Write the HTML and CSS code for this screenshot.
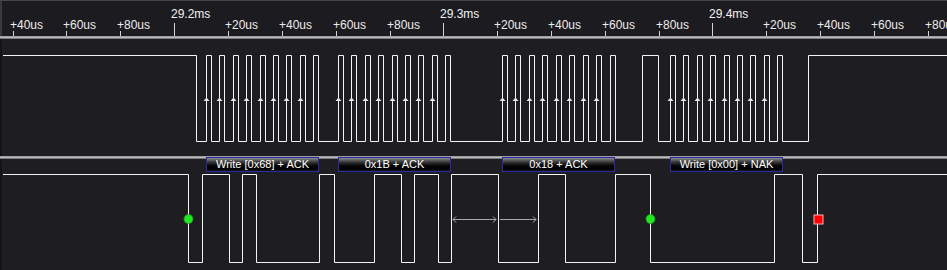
FILE: index.html
```html
<!DOCTYPE html>
<html lang="en">
<head>
    <meta charset="UTF-8">
    <title>I2C capture</title>
    <link rel="stylesheet" href="styles.css">
</head>
<body>
    <div class="scope">
        <div class="ruler">
            <svg class="ruler-svg" width="947" height="36">
                <g class="ticks">
                    <path d="M13.5 31V36M66.5 31V36M120.5 31V36M228.5 31V36M282.5 31V36M336.5 31V36M390.5 31V36M497.5 31V36M551.5 31V36M605.5 31V36M659.5 31V36M766.5 31V36M820.5 31V36M874.5 31V36M928.5 31V36"/>
                    <path d="M174.5 23V36M443.5 23V36M712.5 23V36"/>
                </g>
                <g class="labels">
                    <text x="10" y="29">+40us</text>
                    <text x="63" y="29">+60us</text>
                    <text x="117" y="29">+80us</text>
                    <text class="major" x="171" y="18">29.2ms</text>
                    <text x="225" y="29">+20us</text>
                    <text x="279" y="29">+40us</text>
                    <text x="333" y="29">+60us</text>
                    <text x="387" y="29">+80us</text>
                    <text class="major" x="440" y="18">29.3ms</text>
                    <text x="494" y="29">+20us</text>
                    <text x="548" y="29">+40us</text>
                    <text x="602" y="29">+60us</text>
                    <text x="656" y="29">+80us</text>
                    <text class="major" x="709" y="18">29.4ms</text>
                    <text x="763" y="29">+20us</text>
                    <text x="817" y="29">+40us</text>
                    <text x="871" y="29">+60us</text>
                    <text x="925" y="29">+80us</text>
                </g>
            </svg>
        </div>
        <div class="divider"></div>

        <!-- canal 1: SCL -->
        <div class="channel scl">
            <svg width="947" height="117">
                <defs>
                    <path id="edge" d="M-3 62 L0 58.5 L3 62 Z"/>
                </defs>
                <path class="wave" d="M3 16.5H196.5V102.5
                    H206.5V16.5H211.5V102.5H219.5V16.5H224.5V102.5H233.5V16.5H238.5V102.5H246.5V16.5H251.5V102.5
                    H260.5V16.5H265.5V102.5H273.5V16.5H278.5V102.5H286.5V16.5H291.5V102.5H300.5V16.5H305.5V102.5
                    H313.5V16.5H318.5V102.5
                    H338.5V16.5H343.5V102.5H351.5V16.5H356.5V102.5H365.5V16.5H370.5V102.5H378.5V16.5H383.5V102.5
                    H392.5V16.5H397.5V102.5H405.5V16.5H410.5V102.5H418.5V16.5H423.5V102.5H432.5V16.5H437.5V102.5
                    H445.5V16.5H450.5V102.5
                    H502.5V16.5H507.5V102.5H515.5V16.5H520.5V102.5H529.5V16.5H534.5V102.5H542.5V16.5H547.5V102.5
                    H556.5V16.5H561.5V102.5H569.5V16.5H574.5V102.5H583.5V16.5H588.5V102.5H596.5V16.5H601.5V102.5
                    H610.5V16.5H615.5V102.5
                    H642.5V16.5H658.5V102.5
                    H670.5V16.5H675.5V102.5H683.5V16.5H688.5V102.5H697.5V16.5H702.5V102.5H710.5V16.5H715.5V102.5
                    H724.5V16.5H729.5V102.5H737.5V16.5H742.5V102.5H750.5V16.5H755.5V102.5H764.5V16.5H769.5V102.5
                    H777.5V16.5H782.5V102.5
                    H808.5V16.5H947"/>
                <g class="edges">
                    <use href="#edge" x="206.5"/><use href="#edge" x="219.5"/><use href="#edge" x="233.5"/><use href="#edge" x="246.5"/>
                    <use href="#edge" x="260.5"/><use href="#edge" x="273.5"/><use href="#edge" x="286.5"/><use href="#edge" x="300.5"/>
                    <use href="#edge" x="338.5"/><use href="#edge" x="351.5"/><use href="#edge" x="365.5"/><use href="#edge" x="378.5"/>
                    <use href="#edge" x="392.5"/><use href="#edge" x="405.5"/><use href="#edge" x="418.5"/><use href="#edge" x="432.5"/>
                    <use href="#edge" x="502.5"/><use href="#edge" x="515.5"/><use href="#edge" x="529.5"/><use href="#edge" x="542.5"/>
                    <use href="#edge" x="556.5"/><use href="#edge" x="569.5"/><use href="#edge" x="583.5"/><use href="#edge" x="596.5"/>
                    <use href="#edge" x="670.5"/><use href="#edge" x="683.5"/><use href="#edge" x="697.5"/><use href="#edge" x="710.5"/>
                    <use href="#edge" x="724.5"/><use href="#edge" x="737.5"/><use href="#edge" x="750.5"/><use href="#edge" x="764.5"/>
                </g>
            </svg>
        </div>
        <div class="divider"></div>

        <!-- canal 2: SDA, com as etiquetas decodificadas -->
        <div class="channel sda">
            <svg width="947" height="111">
                <path class="wave" d="M3 15.5H188.5V103.5H202.5V15.5H229.5V103.5H242.5V15.5H256.5V103.5H319.5V15.5H334.5V103.5
                    H374.5V15.5H401.5V103.5H414.5V15.5H438.5V103.5H451.5V15.5H498.5V103.5H538.5V15.5H565.5V103.5
                    H615.5V15.5H650.5V103.5H774.5V15.5H802.5V103.5H817.5V15.5H947"/>
                <g class="span">
                    <path d="M453 60.5H496M456 57.5L453 60.5L456 63.5M493 57.5L496 60.5L493 63.5"/>
                    <path d="M500 60.5H536M533 57.5L536 60.5L533 63.5"/>
                </g>
                <circle class="start" cx="188.5" cy="60" r="4.5"/>
                <circle class="start" cx="650.5" cy="60" r="4.5"/>
                <rect class="stop" x="814" y="56" width="9" height="9"/>
            </svg>
            <div class="tag" style="left: 206px;">Write [0x68] + ACK</div>
            <div class="tag" style="left: 338px;">0x1B + ACK</div>
            <div class="tag" style="left: 502px;">0x18 + ACK</div>
            <div class="tag" style="left: 670px;">Write [0x00] + NAK</div>
        </div>
    </div>
</body>
</html>
```

FILE: styles.css
```css
body {
    margin: 0;
    padding: 0;
    background-color: #1e1d22;
    font-family: "Liberation Sans", Arial, sans-serif;
    overflow: hidden;
}
.scope {
    display: flex;
    flex-direction: column;
    width: 947px;
    height: 270px;
    overflow: hidden;
}
svg {
    display: block;
}
.ruler {
    height: 36px;
    flex: none;
    background-color: #1c1b20;
    box-shadow: inset 0 1px 0 #46464a, inset 2px 0 0 #3a3a3e;
}
.ticks path {
    stroke: #d2d2d2;
    stroke-width: 1;
}
.labels text {
    fill: #ececec;
    font-size: 12px;
}
.labels text.major {
    fill: #f2f2f2;
}
.divider {
    height: 3px;
    flex: none;
    background: linear-gradient(#8a8a8a, #c4c4c4 45%, #5a5a5a);
}
.channel {
    position: relative;
    flex: none;
    box-shadow: inset 2px 0 0 #141417;
}
.scl {
    height: 117px;
}
.sda {
    height: 111px;
}
.wave {
    fill: none;
    stroke: #f4f4f4;
    stroke-width: 1;
}
.edges use {
    fill: #e6e6e6;
}
.span path {
    fill: none;
    stroke: #a8a8a8;
    stroke-width: 1;
}
.start {
    fill: #22e622;
    stroke: #1a9a1a;
    stroke-width: 0.8;
}
.stop {
    fill: #ff0000;
    stroke: #ffb0b0;
    stroke-width: 1;
}
.tag {
    position: absolute;
    top: -2px;
    width: 111px;
    height: 13px;
    border: 1px solid #2a2aa8;
    background: linear-gradient(#8c8c8c 0%, #3a3a3a 30%, #050505 60%, #000 85%, #1a1a1a 100%);
    color: #fff;
    font-size: 11px;
    line-height: 13px;
    text-align: center;
    white-space: nowrap;
}
```
